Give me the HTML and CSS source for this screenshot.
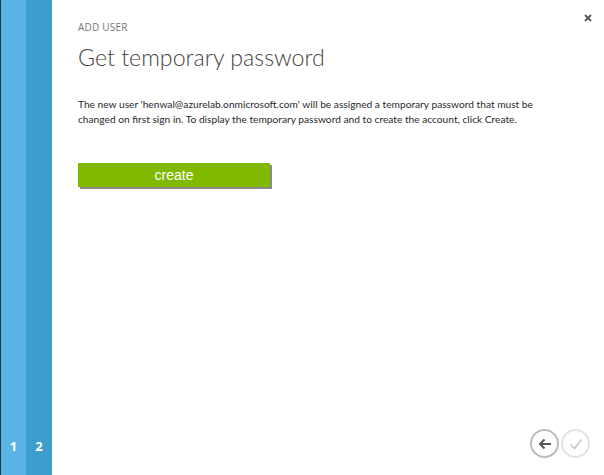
FILE: index.html
```html
<!DOCTYPE html>
<html lang="en">
<head>
  <meta charset="UTF-8" />
  <title>Add user</title>
  <link rel="stylesheet" href="styles.css">
</head>
<body>
  <div class="steps">
    <div class="step step1"><span>1</span></div>
    <div class="step step2"><span>2</span></div>
  </div>

  <div class="dialog">
    <a class="close" href="#">
      <svg width="8" height="8" viewBox="0 0 8 8"><path d="M1 1L7 7M7 1L1 7" stroke="#555" stroke-width="1.8"/></svg>
    </a>
    <div class="label">ADD USER</div>
    <h1>Get temporary password</h1>
    <p class="info">The new user 'henwal@azurelab.onmicrosoft.com' will be assigned a temporary password that must be changed on first sign in. To display the temporary password and to create the account, click Create.</p>
    <button class="create">create</button>

    <div class="nav">
      <span class="circle back">
        <svg width="14" height="12" viewBox="0 0 14 12"><path d="M13 6H2M6.5 1.5L2 6l4.5 4.5" fill="none" stroke="#555" stroke-width="2"/></svg>
      </span>
      <span class="circle done">
        <svg width="14" height="12" viewBox="0 0 14 12"><path d="M1.5 6.5l4 4L12.5 1.5" fill="none" stroke="#c8c8c8" stroke-width="1.6"/></svg>
      </span>
    </div>
  </div>
</body>
</html>
```

FILE: styles.css
```css
body {
  margin: 0;
  height: 475px;
  display: flex;
  font-family: "Open Sans", "Segoe UI", sans-serif;
  background: #fff;
  overflow: hidden;
}

.steps {
  display: flex;
  border-left: 1px solid #1d3442;
}

.step {
  display: flex;
  align-items: flex-end;
  justify-content: center;
  padding-bottom: 20px;
  box-sizing: border-box;
  color: #fff;
  font-weight: bold;
  font-size: 13px;
}

.step1 { width: 25px; background: #59b4e4; }
.step2 { width: 26px; background: #3d9dcc; }

.dialog {
  flex: 1;
  position: relative;
  padding: 20px 0 0 26px;
}

.close {
  position: absolute;
  display: block;
  line-height: 0;
  top: 14px;
  right: 12px;
}

.label {
  font-size: 10px;
  color: #777;
  letter-spacing: 0.2px;
}

h1 {
  font-family: Lato, "Open Sans", sans-serif;
  font-weight: 300;
  font-size: 23.2px;
  color: #444;
  margin: 9px 0 0;
}

.info {
  font-family: Lato, "Open Sans", sans-serif;
  font-size: 10.2px;
  line-height: 15px;
  color: #2a2a2a;
  margin: 26px 0 0;
  width: 460px;
}

.create {
  margin-top: 36px;
  width: 192px;
  height: 24px;
  border: none;
  background: #7fba00;
  color: #fff;
  font-family: "Liberation Sans", Arial, sans-serif;
  font-size: 14px;
  box-shadow: 2px 2px 0 #8a8a8a;
  cursor: pointer;
}

.nav {
  position: absolute;
  right: 14px;
  bottom: 17px;
  display: flex;
  gap: 2px;
}

.circle {
  width: 25px;
  height: 25px;
  border-radius: 50%;
  display: flex;
  align-items: center;
  justify-content: center;
}

.back { border: 2px solid #bdbdbd; }
.done { border: 2px solid #e3e3e3; }
```
